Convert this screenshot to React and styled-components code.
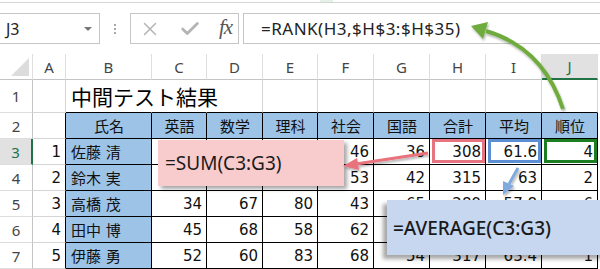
import styled, { createGlobalStyle, css } from "styled-components";
import { X, Check } from "lucide-react";

const GlobalStyle = createGlobalStyle`
  body {
    margin: 0;
    background: #ffffff;
    font-family: "Noto Sans", "Noto Sans CJK JP", sans-serif;
  }
`;

const GRAY = "#d4d4d4";
const GREEN = "#217346";
const widths = [33, 33, 86, 55, 56, 55, 56, 56, 56, 56, 56];
const letters = ["A", "B", "C", "D", "E", "F", "G", "H", "I", "J"];

const rows = [
  ["", "中間テスト結果"],
  ["", "氏名", "英語", "数学", "理科", "社会", "国語", "合計", "平均", "順位"],
  ["1", "佐藤 清", "62", "80", "84", "46", "36", "308", "61.6", "4"],
  ["2", "鈴木 実", "75", "70", "75", "53", "42", "315", "63", "2"],
  ["3", "高橋 茂", "34", "67", "80", "43", "65", "289", "57.8", "6"],
  ["4", "田中 博", "45", "68", "58", "62", "71", "304", "60.8", "5"],
  ["5", "伊藤 勇", "52", "60", "83", "68", "54", "317", "63.4", "1"],
];

const marks = { "3-7": "#e57580", "3-8": "#5b8ed2", "3-9": "#1c7d22" };

const Page = styled.div`
  position: relative;
  width: 600px;
  height: 269px;
  overflow: hidden;
  background: #fff;
`;

const TopStrip = styled.div`
  height: 2px;
  border-bottom: 1px solid #d5d5d5;
  display: flex;
`;

const TabHint = styled.div`
  margin-left: 320px;
  width: 13px;
  background: #e3f1e9;
`;

const FormulaBar = styled.div`
  display: flex;
  align-items: center;
  height: 31px;
  margin-top: 10px;
`;

const NameBox = styled.div`
  box-sizing: border-box;
  width: 101px;
  height: 100%;
  margin-left: -1px;
  border: 1px solid #c6c6c6;
  display: flex;
  align-items: center;
  justify-content: space-between;
  padding: 0 7px 0 6px;
  font-size: 16px;
  color: #222;
`;

const Caret = styled.span`
  width: 0;
  height: 0;
  border-left: 4px solid transparent;
  border-right: 4px solid transparent;
  border-top: 4px solid #777;
`;

const Grip = styled.div`
  width: 30px;
  display: flex;
  flex-direction: column;
  align-items: center;
  gap: 2px;
  span {
    width: 2px;
    height: 2px;
    background: #a8a8a8;
  }
`;

const IconBox = styled.div`
  box-sizing: border-box;
  width: 109px;
  height: 100%;
  border: 1px solid #c6c6c6;
  display: flex;
  align-items: center;
  gap: 18px;
  padding-left: 8px;
  color: #b4b4b4;
`;

const Fx = styled.span`
  font-family: "Liberation Serif", serif;
  font-style: italic;
  font-size: 21px;
  color: #555;
  letter-spacing: -1px;
  margin-top: -3px;
`;

const FormulaInput = styled.div`
  box-sizing: border-box;
  flex: 1;
  height: 100%;
  margin-left: 4px;
  margin-right: -1px;
  border: 1px solid #c6c6c6;
  display: flex;
  align-items: center;
  padding-left: 17px;
  font-size: 17px;
  letter-spacing: 0.5px;
  color: #222;
`;

const Sheet = styled.div`
  position: relative;
  margin-top: 10px;
  display: grid;
  grid-template-columns: ${widths.map((w) => w + "px").join(" ")};
  grid-template-rows: 26px 33px repeat(6, 26px);
`;

const Head = styled.div`
  box-sizing: border-box;
  display: flex;
  align-items: center;
  justify-content: center;
  font-family: "Noto Sans", sans-serif;
  font-size: 15px;
  color: ${(p) => (p.$sel ? GREEN : "#444")};
  background: ${(p) => (p.$sel ? "#e1e1e1" : "#fff")};
  border-right: ${(p) => (p.$row && p.$sel ? `2px solid ${GREEN}` : `1px solid ${p.$row ? "#c4c4c4" : "#dedede"}`)};
  border-bottom: ${(p) => (!p.$row && p.$sel ? `2px solid ${GREEN}` : `1px solid ${p.$row ? "#dedede" : "#c4c4c4"}`)};
`;

const Corner = styled(Head)`
  position: relative;
  &::after {
    content: "";
    position: absolute;
    right: 3px;
    bottom: 3px;
    border-left: 18px solid transparent;
    border-bottom: 18px solid #dcdcdc;
  }
`;

const Cell = styled.div`
  position: relative;
  box-sizing: border-box;
  display: flex;
  align-items: center;
  justify-content: ${(p) => p.$align};
  padding: 0 4px 0 5px;
  overflow: visible;
  white-space: nowrap;
  font-family: "DejaVu Sans", "Noto Sans CJK JP", sans-serif;
  font-size: 15px;
  color: #111;
  background: ${(p) => p.$fill || "#fff"};
  border-right: 1px solid ${(p) => p.$br};
  border-bottom: 1px solid ${(p) => p.$bb};
  ${(p) =>
    p.$mark &&
    css`
      &::after {
        content: "";
        position: absolute;
        top: 0;
        left: 2px;
        right: 0;
        bottom: 1px;
        border: 3px solid ${p.$mark};
      }
    `}
`;

const Title = styled.span`
  position: relative;
  z-index: 1;
  font-family: "Noto Sans CJK JP", sans-serif;
  font-size: 21px;
  color: #000;
`;

const Callout = styled.div`
  position: absolute;
  box-sizing: border-box;
  display: flex;
  align-items: center;
  font-family: "Noto Sans", sans-serif;
  font-size: 19px;
  color: #1a1a1a;
  z-index: 2;
  ${(p) =>
    p.$tone === "pink"
      ? css`
          left: 158px;
          top: 86px;
          width: 186px;
          height: 46px;
          padding-left: 7px;
          background: #f8cbcd;
          box-shadow: 3px 3px 4px rgba(0, 0, 0, 0.35);
        `
      : css`
          left: 387px;
          top: 146px;
          width: 220px;
          height: 55px;
          padding-left: 6px;
          font-weight: 500;
          background: #c6d7ef;
          box-shadow: -4px 4px 4px rgba(0, 0, 0, 0.35);
        `}
`;

const Arrows = styled.svg`
  position: absolute;
  left: 0;
  top: 0;
  z-index: 3;
  pointer-events: none;
`;

function bodyCell(r, c, value) {
  const inTable = r >= 2 && c >= 1;
  let br = GRAY;
  let bb = GRAY;
  if (inTable || (c === 0 && r >= 2)) br = "#000";
  if (inTable || (r === 1 && c >= 1)) bb = "#000";
  if (r === 1 && (c === 1 || c === 2)) br = "transparent";
  const blue = (r === 2 && c >= 1) || (r >= 2 && c === 1);
  let align = "flex-end";
  if (r === 2 || r === 1) align = r === 2 ? "center" : "flex-start";
  if (c === 1 && r >= 3) align = "flex-start";
  return (
    <Cell
      key={`${r}-${c}`}
      $br={br}
      $bb={bb}
      $fill={blue ? "#9dc3e6" : null}
      $align={align}
      $mark={marks[`${r}-${c}`]}
    >
      {r === 1 && c === 1 ? <Title>{value}</Title> : value}
    </Cell>
  );
}

export default function App() {
  return (
    <Page>
      <GlobalStyle />
      <TopStrip>
        <TabHint />
      </TopStrip>
      <FormulaBar>
        <NameBox>
          J3
          <Caret />
        </NameBox>
        <Grip>
          <span />
          <span />
          <span />
        </Grip>
        <IconBox>
          <X size={22} strokeWidth={1.6} />
          <Check size={22} strokeWidth={3} />
          <Fx>fx</Fx>
        </IconBox>
        <FormulaInput>=RANK(H3,$H$3:$H$35)</FormulaInput>
      </FormulaBar>
      <Sheet>
        <Corner />
        {letters.map((l) => (
          <Head key={l} $sel={l === "J"}>
            {l}
          </Head>
        ))}
        {rows.map((row, i) => {
          const r = i + 1;
          return [
            <Head key={`h${r}`} $row $sel={r === 3}>
              {r}
            </Head>,
            ...letters.map((_, c) => bodyCell(r, c, row[c] || "")),
          ];
        })}
        <Callout $tone="pink">=SUM(C3:G3)</Callout>
        <Callout $tone="blue">=AVERAGE(C3:G3)</Callout>
      </Sheet>
      <Arrows width="600" height="269" viewBox="0 0 600 269">
        <defs>
          <filter id="sh" x="-20%" y="-20%" width="140%" height="140%">
            <feDropShadow dx="1" dy="2" stdDeviation="1.2" floodOpacity="0.3" />
          </filter>
        </defs>
        <g filter="url(#sh)">
          <path d="M563 109 C551 72 527 43 486 31" fill="none" stroke="#6fac3c" strokeWidth="4" />
          <polygon points="471,26 488,22 483,39" fill="#6fac3c" />
          <line x1="428" y1="153" x2="356" y2="164" stroke="#e8737d" strokeWidth="3" />
          <polygon points="343,166 357,158 359,170" fill="#e8737d" />
          <line x1="518" y1="168" x2="509" y2="184" stroke="#80aade" strokeWidth="3" />
          <polygon points="503,195 503,181 514,186" fill="#80aade" />
        </g>
      </Arrows>
    </Page>
  );
}
